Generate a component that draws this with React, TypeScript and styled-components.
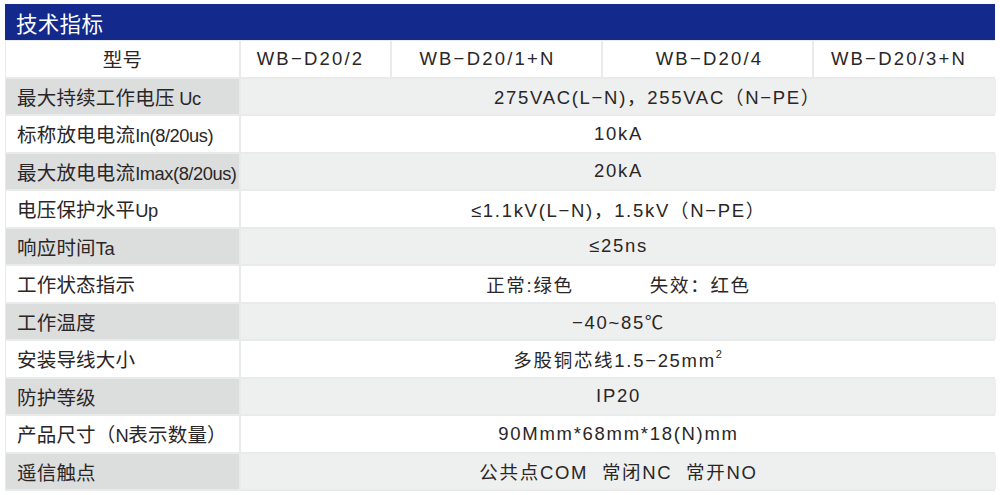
import React from "react";
import styled, { createGlobalStyle } from "styled-components";

const Global = createGlobalStyle`
  html, body { margin: 0; padding: 0; background: #ffffff; }
  body { font-family: "Noto Sans CJK SC", "Liberation Sans", sans-serif; }
`;

const Page = styled.div`
  width: 1000px;
  height: 495px;
  padding: 4px 5px 0 5px;
  box-sizing: border-box;
`;

const TitleBar = styled.div`
  height: 36px;
  background: #13298b;
  color: #ffffff;
  display: flex;
  align-items: center;
  padding-left: 11px;
  font-family: "Noto Sans CJK SC", sans-serif;
  font-size: 21.5px;
  letter-spacing: 0.3px;
`;

const Table = styled.div`
  display: grid;
  grid-template-columns: 233px 149px 209px 209px 182px;
  grid-auto-rows: 35.5px;
  gap: 2px;
  background: #e9eaea;
  padding: 1px 1px 2px 1px;
  width: 990px;
  box-sizing: border-box;
`;

const Cell = styled.div<{ $tone: "white" | "label" | "value"; $span?: number; $center?: boolean }>`
  grid-column: span ${(p) => p.$span ?? 1};
  background: ${(p) => (p.$tone === "white" ? "#ffffff" : p.$tone === "label" ? "#dcdddd" : "#eeefef")};
  display: flex;
  align-items: center;
  justify-content: ${(p) => (p.$center ? "center" : "flex-start")};
  padding-left: ${(p) => (p.$center ? "0" : "11px")};
  color: #2a2627;
  font-family: "Noto Sans CJK SC", sans-serif;
  font-size: 19.5px;
  letter-spacing: 0.2px;
  white-space: pre;
`;

const LabelText = styled.span`
  white-space: pre;
`;

const Lat = styled.span`
  font-family: "Liberation Sans", sans-serif;
  font-size: 18.3px;
  letter-spacing: -0.45px;
`;

const Model = styled.span<{ $shift: number }>`
  font-family: "Liberation Sans", "Noto Sans CJK SC", sans-serif;
  font-size: 18.5px;
  letter-spacing: 2.2px;
  margin-left: ${(p) => (p.$shift < 0 ? 0 : p.$shift * 2)}px;
  margin-right: ${(p) => (p.$shift < 0 ? -p.$shift * 2 : 0)}px;
`;

const Value = styled.span<{ $shift: number }>`
  font-family: "Liberation Sans", "Noto Sans CJK SC", sans-serif;
  font-size: 18.5px;
  letter-spacing: 1.7px;
  white-space: pre;
  margin-left: ${(p) => p.$shift * 2}px;
`;

const Gap = styled.span`
  display: inline-block;
  width: 76px;
`;

const Sup = styled.sup`
  font-size: 11px;
  vertical-align: 9px;
  line-height: 0;
`;

function Label({ text }: { text: string }) {
  const parts = text.split(/([A-Za-z0-9()/. ]+)/);
  return (
    <LabelText>
      {parts.map((p, i) => (i % 2 === 1 ? <Lat key={i}>{p}</Lat> : p))}
    </LabelText>
  );
}

const rows: { label: string; value: React.ReactNode; shift?: number }[] = [
  { label: "最大持续工作电压 Uc", value: "275VAC(L−N)，255VAC（N−PE）", shift: 39 },
  { label: "标称放电电流In(8/20us)", value: "10kA" },
  { label: "最大放电电流Imax(8/20us)", value: "20kA" },
  { label: "电压保护水平Up", value: "≤1.1kV(L−N)，1.5kV（N−PE）" },
  { label: "响应时间Ta", value: "≤25ns" },
  {
    label: "工作状态指示",
    value: (
      <>
        正常:绿色
        <Gap />
        失效：红色
      </>
    ),
  },
  { label: "工作温度", value: "−40~85℃" },
  {
    label: "安装导线大小",
    value: (
      <>
        多股铜芯线1.5−25mm<Sup>2</Sup>
      </>
    ),
  },
  { label: "防护等级", value: "IP20" },
  { label: "产品尺寸（N表示数量）", value: "90Mmm*68mm*18(N)mm" },
  { label: "遥信触点", value: "公共点COM  常闭NC  常开NO" },
];

const models: { name: string; shift: number }[] = [
  { name: "WB−D20/2", shift: -5 },
  { name: "WB−D20/1+N", shift: -9 },
  { name: "WB−D20/4", shift: 2 },
  { name: "WB−D20/3+N", shift: -6 },
];

export default function App() {
  return (
    <Page>
      <Global />
      <TitleBar>技术指标</TitleBar>
      <Table>
        <Cell $tone="white" $center>型号</Cell>
        {models.map((m) => (
          <Cell key={m.name} $tone="white" $center>
            <Model $shift={m.shift}>{m.name}</Model>
          </Cell>
        ))}
        {rows.map((r, i) => {
          const gray = i % 2 === 0;
          return (
            <React.Fragment key={r.label}>
              <Cell $tone={gray ? "label" : "white"}>
                <Label text={r.label} />
              </Cell>
              <Cell $tone={gray ? "value" : "white"} $span={4} $center>
                <Value $shift={r.shift ?? 0}>{r.value}</Value>
              </Cell>
            </React.Fragment>
          );
        })}
      </Table>
    </Page>
  );
}
